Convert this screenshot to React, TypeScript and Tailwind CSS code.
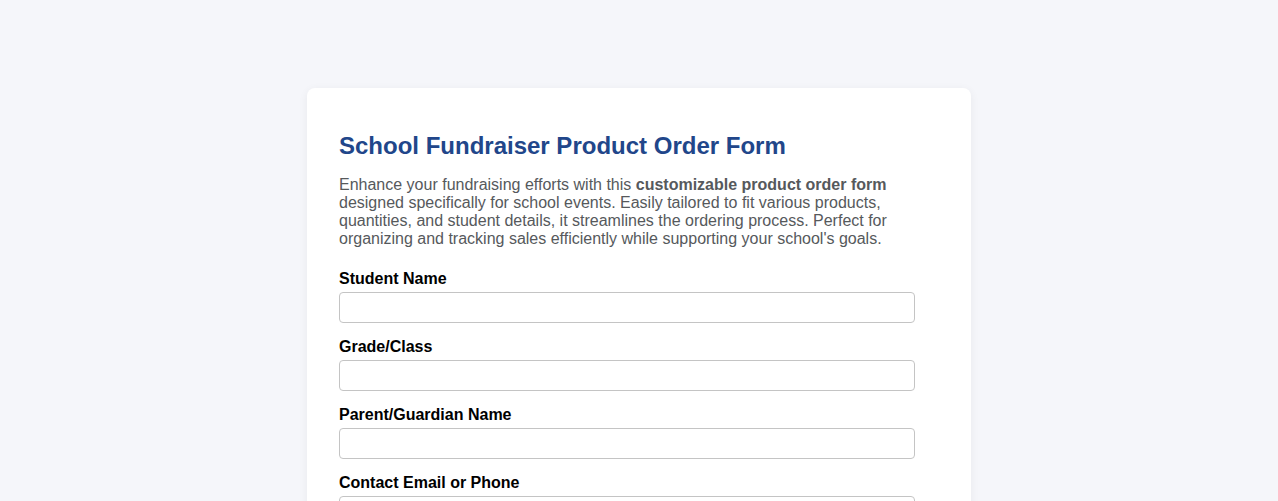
export default function App() {
  const fields = ["Student Name", "Grade/Class", "Parent/Guardian Name", "Contact Email or Phone"];
  return (
    <div className="min-h-[501px] bg-[#f5f6fa] pt-[88px] pb-10" style={{ fontFamily: '"Liberation Sans", Arial, sans-serif' }}>
      <div className="mx-auto w-[664px] rounded-lg bg-white px-8 pt-[44px] pb-8 shadow-[0_2px_10px_rgba(0,0,0,0.06)]">
        <h1 className="text-[24px] font-bold leading-[27px] text-[#21468a]">School Fundraiser Product Order Form</h1>
        <p className="mt-[17px] text-[16px] leading-[18px] text-[#56595c]">
          Enhance your fundraising efforts with this <strong className="font-bold">customizable product order form</strong> designed specifically for school events. Easily tailored to fit various products, quantities, and student details, it streamlines the ordering process. Perfect for organizing and tracking sales efficiently while supporting your school's goals.
        </p>
        <div className="mt-[22px] flex flex-col">
          {fields.map((f, i) => (
            <div key={f} className={i === 0 ? "" : "mt-[15px]"}>
              <label className="block text-[16px] font-bold leading-[18px] text-black">{f}</label>
              <input className="mt-[4px] block h-[31px] w-[576px] rounded-[4px] border border-[#c4c4c4] bg-white px-2" />
            </div>
          ))}
        </div>
      </div>
    </div>
  );
}
